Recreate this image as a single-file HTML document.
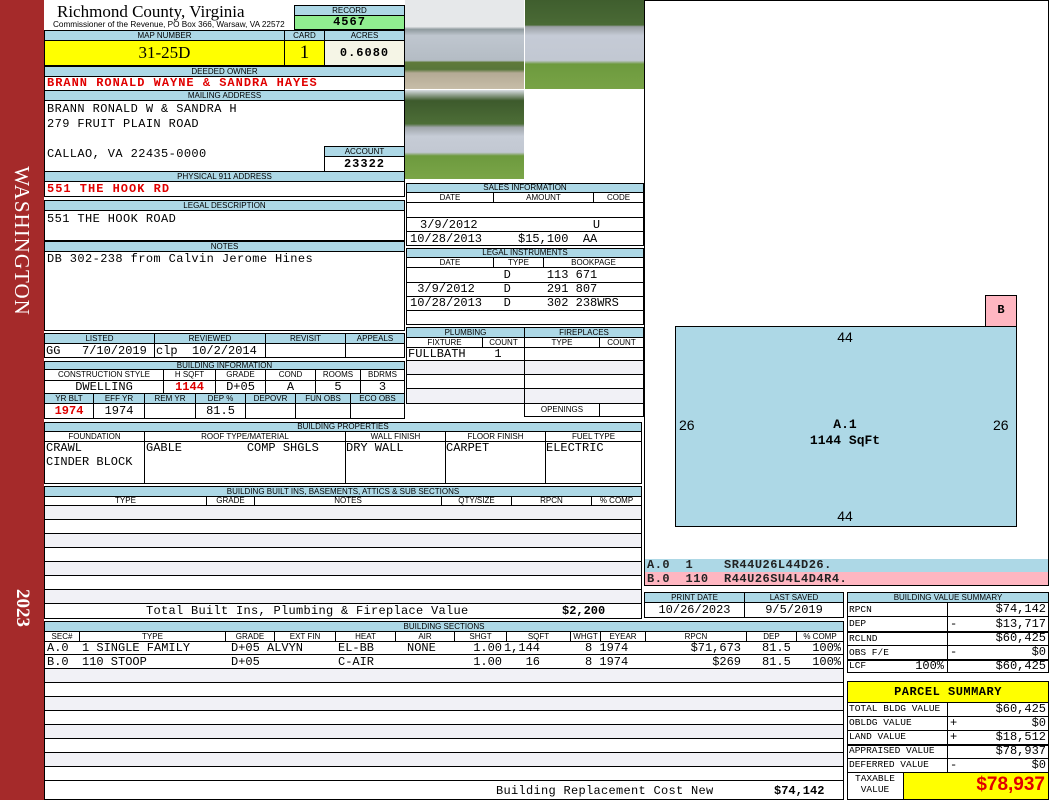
<!DOCTYPE html>
<html><head><meta charset="utf-8"><style>
*{margin:0;padding:0}
body{width:1050px;height:800px;position:relative;background:#fff;overflow:hidden;font-family:"Liberation Sans",sans-serif}
div{position:absolute;box-sizing:border-box}
.c{border:1px solid #000;background:#fff}
.h{border:1px solid #000;background:#add8e6;font-size:8px;text-align:center;line-height:9px;color:#000;white-space:nowrap;overflow:hidden}
.s{border:1px solid #000;background:#fff;font-size:8px;text-align:center;line-height:9px;white-space:nowrap;overflow:hidden}
.m{font:12px "Liberation Mono",monospace;white-space:pre;line-height:14px}
.r{color:#e00000;font-weight:bold}
.g{background:#f1f1f6}
.sm{font:9.5px "Liberation Mono",monospace;white-space:pre;line-height:13px}
</style></head><body>

<!-- left bar -->
<div style="left:0;top:0;width:44px;height:800px;background:#a52a2a"></div>
<div style="left:22px;top:241px;width:0;height:0"><div style="left:-100px;top:-12px;width:200px;height:24px;transform:rotate(90deg);color:#fff;font:21px 'Liberation Serif',serif;text-align:center;line-height:24px;letter-spacing:1px">WASHINGTON</div></div>
<div style="left:22px;top:608px;width:0;height:0"><div style="left:-40px;top:-11px;width:80px;height:22px;transform:rotate(90deg);color:#fff;font:bold 19px 'Liberation Serif',serif;text-align:center;line-height:22px">2023</div></div>

<!-- title -->
<div style="left:57px;top:2px;font:17px 'Liberation Serif',serif;line-height:19px;white-space:nowrap">Richmond County, Virginia</div>
<div style="left:53px;top:20px;font:8.2px 'Liberation Sans',sans-serif;white-space:nowrap;line-height:9px">Commissioner of the Revenue, PO Box 366, Warsaw, VA 22572</div>
<div class="h" style="left:294px;top:5px;width:111px;height:11px">RECORD</div>
<div class="c" style="left:294px;top:15px;width:111px;height:15px;background:#90ee90;text-align:center;font:bold 12px 'Liberation Mono',monospace;line-height:13px;letter-spacing:1px">4567</div>

<!-- map number -->
<div class="h" style="left:44px;top:30px;width:241px;height:11px">MAP NUMBER</div>
<div class="h" style="left:284px;top:30px;width:41px;height:11px">CARD</div>
<div class="h" style="left:324px;top:30px;width:81px;height:11px">ACRES</div>
<div class="c" style="left:44px;top:40px;width:241px;height:26px;background:#ffff00;text-align:center;font:17px 'Liberation Serif',serif;line-height:24px">31-25D</div>
<div class="c" style="left:284px;top:40px;width:41px;height:26px;background:#ffff00;text-align:center;font:19px 'Liberation Serif',serif;line-height:24px">1</div>
<div class="c" style="left:324px;top:40px;width:81px;height:26px;background:#f5f5e6;text-align:center;font:bold 12px 'Liberation Mono',monospace;line-height:24px;letter-spacing:1px">0.6080</div>

<!-- deeded owner -->
<div class="h" style="left:44px;top:66px;width:361px;height:11px">DEEDED OWNER</div>
<div class="c" style="left:44px;top:76px;width:361px;height:15px"></div>
<div class="m r" style="left:47px;top:76px;letter-spacing:1px">BRANN RONALD WAYNE &amp; SANDRA HAYES</div>

<!-- mailing -->
<div class="h" style="left:44px;top:90px;width:361px;height:11px">MAILING ADDRESS</div>
<div class="c" style="left:44px;top:100px;width:361px;height:72px"></div>
<div class="m" style="left:47px;top:102px;letter-spacing:.4px">BRANN RONALD W &amp; SANDRA H</div>
<div class="m" style="left:47px;top:117px;letter-spacing:.4px">279 FRUIT PLAIN ROAD</div>
<div class="m" style="left:47px;top:147px;letter-spacing:.4px">CALLAO, VA 22435-0000</div>
<div class="h" style="left:324px;top:146px;width:81px;height:11px">ACCOUNT</div>
<div class="c" style="left:324px;top:156px;width:81px;height:16px;text-align:center;font:bold 12px 'Liberation Mono',monospace;line-height:14px;letter-spacing:1px">23322</div>

<!-- physical -->
<div class="h" style="left:44px;top:171px;width:361px;height:11px">PHYSICAL 911 ADDRESS</div>
<div class="c" style="left:44px;top:181px;width:361px;height:16px"></div>
<div class="m r" style="left:47px;top:182px;letter-spacing:1px">551 THE HOOK RD</div>

<!-- legal desc -->
<div class="h" style="left:44px;top:200px;width:361px;height:11px">LEGAL DESCRIPTION</div>
<div class="c" style="left:44px;top:210px;width:361px;height:31px"></div>
<div class="m" style="left:47px;top:212px;letter-spacing:.4px">551 THE HOOK ROAD</div>
<div class="h" style="left:44px;top:241px;width:361px;height:11px">NOTES</div>
<div class="c" style="left:44px;top:251px;width:361px;height:80px"></div>
<div class="m" style="left:47px;top:252px;letter-spacing:.4px">DB 302-238 from Calvin Jerome Hines</div>

<!-- listed -->
<div class="h" style="left:44px;top:333px;width:111px;height:11px">LISTED</div>
<div class="h" style="left:154px;top:333px;width:112px;height:11px">REVIEWED</div>
<div class="h" style="left:265px;top:333px;width:81px;height:11px">REVISIT</div>
<div class="h" style="left:345px;top:333px;width:60px;height:11px">APPEALS</div>
<div class="c" style="left:44px;top:343px;width:111px;height:15px"></div>
<div class="c" style="left:154px;top:343px;width:112px;height:15px"></div>
<div class="c" style="left:265px;top:343px;width:81px;height:15px"></div>
<div class="c" style="left:345px;top:343px;width:60px;height:15px"></div>
<div class="m" style="left:46px;top:344px">GG   7/10/2019</div>
<div class="m" style="left:156px;top:344px">clp  10/2/2014</div>

<!-- building information -->
<div class="h" style="left:44px;top:361px;width:361px;height:9px;line-height:7px">BUILDING INFORMATION</div>
<div class="s" style="left:44px;top:369px;width:120px;height:12px">CONSTRUCTION STYLE</div>
<div class="s" style="left:163px;top:369px;width:53px;height:12px">H SQFT</div>
<div class="s" style="left:215px;top:369px;width:51px;height:12px">GRADE</div>
<div class="s" style="left:265px;top:369px;width:51px;height:12px">COND</div>
<div class="s" style="left:315px;top:369px;width:46px;height:12px">ROOMS</div>
<div class="s" style="left:360px;top:369px;width:45px;height:12px">BDRMS</div>
<div class="c" style="left:44px;top:380px;width:120px;height:14px"></div>
<div class="c" style="left:163px;top:380px;width:53px;height:14px"></div>
<div class="c" style="left:215px;top:380px;width:51px;height:14px"></div>
<div class="c" style="left:265px;top:380px;width:51px;height:14px"></div>
<div class="c" style="left:315px;top:380px;width:46px;height:14px"></div>
<div class="c" style="left:360px;top:380px;width:45px;height:14px"></div>
<div class="m" style="left:44px;top:380px;width:120px;text-align:center">DWELLING</div>
<div class="m r" style="left:163px;top:380px;width:53px;text-align:center">1144</div>
<div class="m" style="left:215px;top:380px;width:51px;text-align:center">D+05</div>
<div class="m" style="left:265px;top:380px;width:51px;text-align:center">A</div>
<div class="m" style="left:315px;top:380px;width:46px;text-align:center">5</div>
<div class="m" style="left:360px;top:380px;width:45px;text-align:center">3</div>
<div class="h" style="left:44px;top:393px;width:50px;height:11px">YR BLT</div>
<div class="h" style="left:93px;top:393px;width:52px;height:11px">EFF YR</div>
<div class="h" style="left:144px;top:393px;width:52px;height:11px">REM YR</div>
<div class="h" style="left:195px;top:393px;width:51px;height:11px">DEP %</div>
<div class="h" style="left:245px;top:393px;width:51px;height:11px">DEPOVR</div>
<div class="h" style="left:295px;top:393px;width:56px;height:11px">FUN OBS</div>
<div class="h" style="left:350px;top:393px;width:55px;height:11px">ECO OBS</div>
<div class="c" style="left:44px;top:403px;width:50px;height:16px"></div>
<div class="c" style="left:93px;top:403px;width:52px;height:16px"></div>
<div class="c" style="left:144px;top:403px;width:52px;height:16px"></div>
<div class="c" style="left:195px;top:403px;width:51px;height:16px"></div>
<div class="c" style="left:245px;top:403px;width:51px;height:16px"></div>
<div class="c" style="left:295px;top:403px;width:56px;height:16px"></div>
<div class="c" style="left:350px;top:403px;width:55px;height:16px"></div>
<div class="m r" style="left:44px;top:404px;width:50px;text-align:center">1974</div>
<div class="m" style="left:93px;top:404px;width:52px;text-align:center">1974</div>
<div class="m" style="left:195px;top:404px;width:51px;text-align:center">81.5</div>

<!-- building properties -->
<div class="h" style="left:44px;top:422px;width:598px;height:10px;line-height:8px">BUILDING PROPERTIES</div>
<div class="s" style="left:44px;top:431px;width:101px;height:11px">FOUNDATION</div>
<div class="s" style="left:144px;top:431px;width:202px;height:11px">ROOF TYPE/MATERIAL</div>
<div class="s" style="left:345px;top:431px;width:101px;height:11px">WALL FINISH</div>
<div class="s" style="left:445px;top:431px;width:101px;height:11px">FLOOR FINISH</div>
<div class="s" style="left:545px;top:431px;width:97px;height:11px">FUEL TYPE</div>
<div class="c" style="left:44px;top:441px;width:101px;height:43px"></div>
<div class="c" style="left:144px;top:441px;width:202px;height:43px"></div>
<div class="c" style="left:345px;top:441px;width:101px;height:43px"></div>
<div class="c" style="left:445px;top:441px;width:101px;height:43px"></div>
<div class="c" style="left:545px;top:441px;width:97px;height:43px"></div>
<div class="m" style="left:46px;top:441px">CRAWL
CINDER BLOCK</div>
<div class="m" style="left:146px;top:441px">GABLE         COMP SHGLS</div>
<div class="m" style="left:346px;top:441px">DRY WALL</div>
<div class="m" style="left:446px;top:441px">CARPET</div>
<div class="m" style="left:546px;top:441px">ELECTRIC</div>

<!-- built ins -->
<div class="h" style="left:44px;top:486px;width:598px;height:11px">BUILDING BUILT INS, BASEMENTS, ATTICS &amp; SUB SECTIONS</div>
<div class="s" style="left:44px;top:496px;width:163px;height:10px;line-height:8px">TYPE</div>
<div class="s" style="left:206px;top:496px;width:49px;height:10px;line-height:8px">GRADE</div>
<div class="s" style="left:254px;top:496px;width:188px;height:10px;line-height:8px">NOTES</div>
<div class="s" style="left:441px;top:496px;width:71px;height:10px;line-height:8px">QTY/SIZE</div>
<div class="s" style="left:511px;top:496px;width:81px;height:10px;line-height:8px">RPCN</div>
<div class="s" style="left:591px;top:496px;width:51px;height:10px;line-height:8px">% COMP</div>
<div class="c g" style="left:44px;top:505px;width:598px;height:15px"></div>
<div class="c" style="left:44px;top:519px;width:598px;height:15px"></div>
<div class="c g" style="left:44px;top:533px;width:598px;height:15px"></div>
<div class="c" style="left:44px;top:547px;width:598px;height:15px"></div>
<div class="c g" style="left:44px;top:561px;width:598px;height:15px"></div>
<div class="c" style="left:44px;top:575px;width:598px;height:15px"></div>
<div class="c g" style="left:44px;top:589px;width:598px;height:15px"></div>
<div class="c" style="left:44px;top:603px;width:598px;height:16px"></div>
<div class="m" style="left:146px;top:604px;letter-spacing:.3px">Total Built Ins, Plumbing &amp; Fireplace Value</div>
<div class="m" style="left:562px;top:604px;font-weight:bold">$2,200</div>

<!-- photos -->
<div style="left:405px;top:0;width:119px;height:89px;background:linear-gradient(180deg,#e6e8ea 0%,#e6e8ea 30%,#8f9a9e 33%,#bfc6cf 40%,#b4bcc4 68%,#5f7a3a 70%,#58763a 78%,#b4aa95 82%,#c7bda8 100%)"></div>
<div style="left:525px;top:0;width:119px;height:89px;background:linear-gradient(180deg,#3f5e2e 0%,#4a6a35 28%,#9a9fa4 30%,#c5cbd6 40%,#c2c8d2 68%,#6d9a3e 72%,#78a346 100%)"></div>
<div style="left:405px;top:90px;width:119px;height:89px;background:linear-gradient(180deg,#d9dee4 0%,#3d5a2c 12%,#4d6e37 38%,#a0a6ab 42%,#c6ccd6 52%,#c2c8d2 70%,#6d9a3e 74%,#7aa548 100%)"></div>

<!-- sales -->
<div class="h" style="left:406px;top:183px;width:238px;height:10px;line-height:8px">SALES INFORMATION</div>
<div class="s" style="left:406px;top:192px;width:88px;height:11px">DATE</div>
<div class="s" style="left:493px;top:192px;width:101px;height:11px">AMOUNT</div>
<div class="s" style="left:593px;top:192px;width:51px;height:11px">CODE</div>
<div class="c" style="left:406px;top:202px;width:238px;height:16px"></div>
<div class="c" style="left:406px;top:217px;width:238px;height:15px"></div>
<div class="c" style="left:406px;top:231px;width:238px;height:15px"></div>
<div class="m" style="left:420px;top:218px">3/9/2012                U</div>
<div class="m" style="left:410px;top:232px">10/28/2013     $15,100  AA</div>

<div class="h" style="left:406px;top:248px;width:238px;height:10px;line-height:8px">LEGAL INSTRUMENTS</div>
<div class="s" style="left:406px;top:257px;width:88px;height:11px">DATE</div>
<div class="s" style="left:493px;top:257px;width:51px;height:11px">TYPE</div>
<div class="s" style="left:543px;top:257px;width:101px;height:11px">BOOKPAGE</div>
<div class="c" style="left:406px;top:267px;width:238px;height:16px"></div>
<div class="c" style="left:406px;top:282px;width:238px;height:15px"></div>
<div class="c" style="left:406px;top:296px;width:238px;height:15px"></div>
<div class="c" style="left:406px;top:310px;width:238px;height:15px"></div>
<div class="m" style="left:410px;top:268px">             D     113 671</div>
<div class="m" style="left:410px;top:282px"> 3/9/2012    D     291 807</div>
<div class="m" style="left:410px;top:296px">10/28/2013   D     302 238WRS</div>

<!-- plumbing / fireplaces -->
<div class="h" style="left:406px;top:327px;width:119px;height:11px">PLUMBING</div>
<div class="h" style="left:524px;top:327px;width:120px;height:11px">FIREPLACES</div>
<div class="s" style="left:406px;top:337px;width:77px;height:11px">FIXTURE</div>
<div class="s" style="left:482px;top:337px;width:43px;height:11px">COUNT</div>
<div class="s" style="left:524px;top:337px;width:76px;height:11px">TYPE</div>
<div class="s" style="left:599px;top:337px;width:45px;height:11px">COUNT</div>
<div class="c" style="left:406px;top:347px;width:119px;height:14px"></div>
<div class="c g" style="left:406px;top:360px;width:119px;height:15px"></div>
<div class="c" style="left:406px;top:374px;width:119px;height:15px"></div>
<div class="c g" style="left:406px;top:388px;width:119px;height:16px"></div>
<div class="c" style="left:524px;top:347px;width:120px;height:14px"></div>
<div class="c g" style="left:524px;top:360px;width:120px;height:15px"></div>
<div class="c" style="left:524px;top:374px;width:120px;height:15px"></div>
<div class="c g" style="left:524px;top:388px;width:120px;height:16px"></div>
<div class="s" style="left:524px;top:403px;width:76px;height:14px;line-height:12px">OPENINGS</div>
<div class="c" style="left:599px;top:403px;width:45px;height:14px"></div>
<div class="m" style="left:408px;top:347px">FULLBATH    1</div>

<!-- sketch -->
<div class="c" style="left:644px;top:0;width:405px;height:560px"></div>
<div style="left:985px;top:295px;width:32px;height:32px;background:#ffb6c1;border:1px solid #000;text-align:center;font:bold 12px 'Liberation Mono',monospace;line-height:28px">B</div>
<div style="left:675px;top:326px;width:342px;height:201px;background:#add8e6;border:1px solid #000"></div>
<div style="left:825px;top:329px;width:40px;text-align:center;font:14px 'Liberation Sans',sans-serif">44</div>
<div style="left:825px;top:508px;width:40px;text-align:center;font:14px 'Liberation Sans',sans-serif">44</div>
<div style="left:679px;top:417px;font:14px 'Liberation Sans',sans-serif">26</div>
<div style="left:993px;top:417px;font:14px 'Liberation Sans',sans-serif">26</div>
<div style="left:785px;top:417px;width:120px;text-align:center;font:bold 13px 'Liberation Mono',monospace;line-height:16px">A.1<br>1144 SqFt</div>

<div style="left:644px;top:559px;width:405px;height:13px;background:#add8e6;border-left:1px solid #000;border-right:1px solid #000"></div>
<div style="left:644px;top:572px;width:405px;height:14px;background:#ffb6c1;border:1px solid #000;border-top:none"></div>
<div class="m" style="left:647px;top:558px;font-size:12px;font-weight:bold;color:#222;letter-spacing:.5px">A.0  1    SR44U26L44D26.</div>
<div class="m" style="left:647px;top:572px;font-size:12px;font-weight:bold;color:#222;letter-spacing:.5px">B.0  110  R44U26SU4L4D4R4.</div>

<!-- print date -->
<div class="h" style="left:644px;top:592px;width:101px;height:11px">PRINT DATE</div>
<div class="h" style="left:744px;top:592px;width:100px;height:11px">LAST SAVED</div>
<div class="c" style="left:644px;top:602px;width:101px;height:16px"></div>
<div class="c" style="left:744px;top:602px;width:100px;height:16px"></div>
<div class="m" style="left:644px;top:603px;width:101px;text-align:center">10/26/2023</div>
<div class="m" style="left:744px;top:603px;width:100px;text-align:center">9/5/2019</div>

<!-- building value summary -->
<div class="h" style="left:847px;top:592px;width:202px;height:11px">BUILDING VALUE SUMMARY</div>
<div class="c" style="left:847px;top:602px;width:101px;height:15px"></div><div class="c" style="left:947px;top:602px;width:102px;height:15px"></div>
<div class="c" style="left:847px;top:616px;width:101px;height:16px"></div><div class="c" style="left:947px;top:616px;width:102px;height:16px"></div>
<div class="c" style="left:847px;top:631px;width:101px;height:15px;border-top-width:2px"></div><div class="c" style="left:947px;top:631px;width:102px;height:15px;border-top-width:2px"></div>
<div class="c" style="left:847px;top:645px;width:101px;height:15px"></div><div class="c" style="left:947px;top:645px;width:102px;height:15px"></div>
<div class="c" style="left:847px;top:659px;width:101px;height:14px;border-top-width:2px"></div><div class="c" style="left:947px;top:659px;width:102px;height:14px;border-top-width:2px"></div>
<div class="sm" style="left:849px;top:603px">RPCN</div>
<div class="sm" style="left:849px;top:617px">DEP</div>
<div class="sm" style="left:849px;top:632px">RCLND</div>
<div class="sm" style="left:849px;top:646px">OBS F/E</div>
<div class="sm" style="left:849px;top:659px">LCF</div>
<div class="m" style="left:900px;top:659px;width:44px;text-align:right">100%</div>
<div class="m" style="left:950px;top:602px;width:96px;text-align:right">$74,142</div>
<div class="m" style="left:950px;top:617px;width:96px;text-align:right">$13,717</div>
<div class="m" style="left:950px;top:631px;width:96px;text-align:right">$60,425</div>
<div class="m" style="left:950px;top:645px;width:96px;text-align:right">$0</div>
<div class="m" style="left:950px;top:659px;width:96px;text-align:right">$60,425</div>
<div class="m" style="left:950px;top:617px">-</div>
<div class="m" style="left:950px;top:645px">-</div>

<!-- parcel summary -->
<div class="c" style="left:847px;top:681px;width:202px;height:22px;background:#ffff00;text-align:center;font:bold 12px 'Liberation Mono',monospace;line-height:20px;letter-spacing:.5px">PARCEL SUMMARY</div>
<div class="c" style="left:847px;top:702px;width:101px;height:15px"></div><div class="c" style="left:947px;top:702px;width:102px;height:15px"></div>
<div class="c" style="left:847px;top:716px;width:101px;height:15px"></div><div class="c" style="left:947px;top:716px;width:102px;height:15px"></div>
<div class="c" style="left:847px;top:730px;width:101px;height:15px"></div><div class="c" style="left:947px;top:730px;width:102px;height:15px"></div>
<div class="c" style="left:847px;top:744px;width:101px;height:15px;border-top-width:2px"></div><div class="c" style="left:947px;top:744px;width:102px;height:15px;border-top-width:2px"></div>
<div class="c" style="left:847px;top:758px;width:101px;height:15px"></div><div class="c" style="left:947px;top:758px;width:102px;height:15px"></div>
<div class="c" style="left:847px;top:772px;width:57px;height:28px"></div>
<div class="c" style="left:903px;top:772px;width:146px;height:28px;background:#ffff00"></div>
<div class="sm" style="left:849px;top:702px">TOTAL BLDG VALUE</div>
<div class="sm" style="left:849px;top:716px">OBLDG VALUE</div>
<div class="sm" style="left:849px;top:730px">LAND VALUE</div>
<div class="sm" style="left:849px;top:744px">APPRAISED VALUE</div>
<div class="sm" style="left:849px;top:758px">DEFERRED VALUE</div>
<div class="sm" style="left:849px;top:773px;width:52px;text-align:center;line-height:11px">TAXABLE
VALUE</div>
<div class="m" style="left:950px;top:702px;width:96px;text-align:right">$60,425</div>
<div class="m" style="left:950px;top:716px;width:96px;text-align:right">$0</div>
<div class="m" style="left:950px;top:730px;width:96px;text-align:right">$18,512</div>
<div class="m" style="left:950px;top:744px;width:96px;text-align:right">$78,937</div>
<div class="m" style="left:950px;top:758px;width:96px;text-align:right">$0</div>
<div class="m" style="left:950px;top:716px">+</div>
<div class="m" style="left:950px;top:730px">+</div>
<div class="m" style="left:950px;top:758px">-</div>
<div style="left:905px;top:772px;width:140px;text-align:right;font:bold 19px 'Liberation Sans',sans-serif;color:#e00000;line-height:26px">$78,937</div>

<!-- building sections -->
<div class="h" style="left:44px;top:621px;width:800px;height:11px">BUILDING SECTIONS</div>
<div class="s" style="left:44px;top:631px;width:36px;height:11px">SEC#</div>
<div class="s" style="left:79px;top:631px;width:147px;height:11px">TYPE</div>
<div class="s" style="left:225px;top:631px;width:50px;height:11px">GRADE</div>
<div class="s" style="left:274px;top:631px;width:62px;height:11px">EXT FIN</div>
<div class="s" style="left:335px;top:631px;width:61px;height:11px">HEAT</div>
<div class="s" style="left:395px;top:631px;width:60px;height:11px">AIR</div>
<div class="s" style="left:454px;top:631px;width:53px;height:11px">SHGT</div>
<div class="s" style="left:506px;top:631px;width:65px;height:11px">SQFT</div>
<div class="s" style="left:570px;top:631px;width:31px;height:11px">WHGT</div>
<div class="s" style="left:600px;top:631px;width:46px;height:11px">EYEAR</div>
<div class="s" style="left:645px;top:631px;width:102px;height:11px">RPCN</div>
<div class="s" style="left:746px;top:631px;width:51px;height:11px">DEP</div>
<div class="s" style="left:796px;top:631px;width:48px;height:11px">% COMP</div>
<div class="c" style="left:44px;top:641px;width:800px;height:14px"></div>
<div class="c" style="left:44px;top:654px;width:800px;height:15px"></div>
<div class="c g" style="left:44px;top:668px;width:800px;height:15px"></div>
<div class="c" style="left:44px;top:682px;width:800px;height:15px"></div>
<div class="c g" style="left:44px;top:696px;width:800px;height:15px"></div>
<div class="c" style="left:44px;top:710px;width:800px;height:15px"></div>
<div class="c g" style="left:44px;top:724px;width:800px;height:15px"></div>
<div class="c" style="left:44px;top:738px;width:800px;height:15px"></div>
<div class="c g" style="left:44px;top:752px;width:800px;height:15px"></div>
<div class="c" style="left:44px;top:766px;width:800px;height:15px"></div>
<div class="c" style="left:44px;top:780px;width:800px;height:20px"></div>
<div class="m" style="left:47px;top:641px">A.0</div>
<div class="m" style="left:82px;top:641px">1 SINGLE FAMILY</div>
<div class="m" style="left:231px;top:641px">D+05 ALVYN</div>
<div class="m" style="left:338px;top:641px">EL-BB</div>
<div class="m" style="left:407px;top:641px">NONE</div>
<div class="m" style="left:47px;top:655px">B.0</div>
<div class="m" style="left:82px;top:655px">110 STOOP</div>
<div class="m" style="left:231px;top:655px">D+05</div>
<div class="m" style="left:338px;top:655px">C-AIR</div>
<div class="m" style="left:440px;top:641px;width:62px;text-align:right">1.00</div>
<div class="m" style="left:440px;top:655px;width:62px;text-align:right">1.00</div>
<div class="m" style="left:480px;top:641px;width:60px;text-align:right">1,144</div>
<div class="m" style="left:480px;top:655px;width:60px;text-align:right">16</div>
<div class="m" style="left:585px;top:641px">8 1974</div>
<div class="m" style="left:585px;top:655px">8 1974</div>
<div class="m" style="left:660px;top:641px;width:81px;text-align:right">$71,673</div>
<div class="m" style="left:660px;top:655px;width:81px;text-align:right">$269</div>
<div class="m" style="left:762px;top:641px">81.5</div>
<div class="m" style="left:762px;top:655px">81.5</div>
<div class="m" style="left:800px;top:641px;width:41px;text-align:right">100%</div>
<div class="m" style="left:800px;top:655px;width:41px;text-align:right">100%</div>
<div class="m" style="left:496px;top:784px;letter-spacing:.3px">Building Replacement Cost New</div>
<div class="m" style="left:774px;top:784px;font-weight:bold">$74,142</div>

</body></html>
